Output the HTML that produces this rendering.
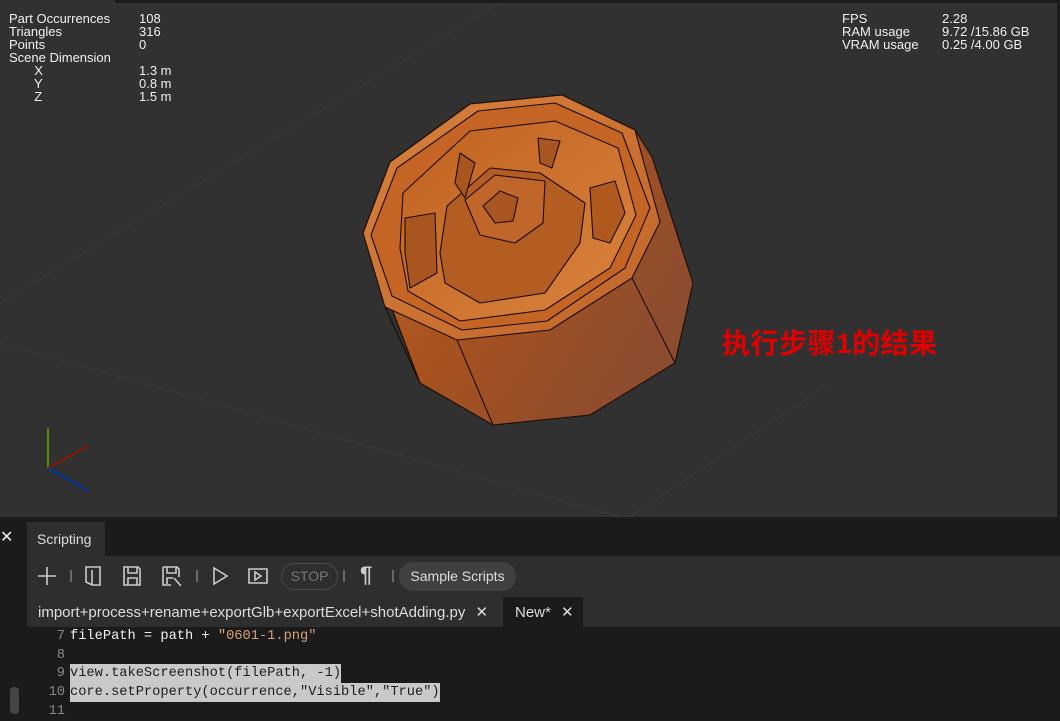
<!DOCTYPE html>
<html><head><meta charset="utf-8"><style>
*{margin:0;padding:0;box-sizing:border-box}
body{width:1060px;height:714px;background:#1b1b1b;overflow:hidden;position:relative;font-family:"Liberation Sans",sans-serif}
.vp{position:absolute;left:0;top:3px;width:1057px;height:514px;background:#313131}
.topbar{position:absolute;left:0;top:0;width:115px;height:3px;background:#313131}
.st{position:absolute;color:#f0f0f0;font-size:13px;line-height:13px}
.st div{white-space:pre;height:13px}
.red{position:absolute;left:722px;top:319px;color:#e00000;font-size:28px;font-weight:bold;font-family:"Liberation Sans","Noto Sans CJK SC",sans-serif;letter-spacing:0.5px}
.tab{position:absolute;left:27px;top:522px;width:78px;height:34px;background:#2e2e2e;color:#ddd;font-size:14px;padding:9px 0 0 10px}
.tb{position:absolute;left:27px;top:556px;width:1033px;height:41px;background:#2e2e2e}
.tabs{position:absolute;left:27px;top:597px;width:1033px;height:30px;background:#2e2e2e}
.t1{position:absolute;left:0;top:0;height:30px;padding:6px 0 0 11px;color:#ddd;font-size:15px;width:476px}
.t2{position:absolute;left:476px;top:0;width:80px;height:30px;background:#1b1b1b;color:#ddd;font-size:15px;padding:6px 0 0 12px}
.ed{position:absolute;left:27px;top:627px;width:1033px;height:87px;background:#1b1b1b;font-family:"Liberation Mono",monospace;font-size:13.7px;color:#f0f0f0}
.ln{position:absolute;height:19px;line-height:19px;white-space:pre}
.num{color:#888;position:absolute;width:38px;text-align:right}
.sel{background:#c9c9c9;color:#1e1e1e}
.icon{position:absolute;top:564px}
</style></head><body>
<div class="topbar"></div>
<div class="vp">
<svg width="1057" height="514" style="position:absolute;left:0;top:0">
<g stroke="#3a3a3a" stroke-width="1" fill="none">
<line x1="0" y1="300" x2="500" y2="0"/>
<line x1="0" y1="340" x2="620" y2="514"/>
<line x1="630" y1="514" x2="830" y2="380"/>
</g>
<defs>
<linearGradient id="g1" x1="0" y1="0" x2="1" y2="0.6"><stop offset="0" stop-color="#c46a30"/><stop offset="0.5" stop-color="#a8521e"/><stop offset="1" stop-color="#8c4c30"/></linearGradient>
<linearGradient id="g2" x1="0" y1="0" x2="1" y2="1"><stop offset="0" stop-color="#c0611f"/><stop offset="1" stop-color="#d9843f"/></linearGradient>
<linearGradient id="g3" x1="0" y1="0" x2="1" y2="1"><stop offset="0" stop-color="#d7803c"/><stop offset="1" stop-color="#c0652a"/></linearGradient>
</defs>
<g stroke="#1a0c04" stroke-width="1.1" stroke-linejoin="round">
<polygon fill="url(#g1)" points="470,101 562,92 635,127 652,154 693,280 675,360 590,412 493,422 420,380 400,327 363,230 390,159"/>
<polygon fill="url(#g3)" points="470,101 562,92 635,127 660,219 632,275 550,327 457,337 385,304 363,230 390,159"/>
<polygon fill="#c46526" points="478,108 555,100 622,130 650,205 625,265 547,318 462,327 392,293 371,232 397,165"/>
<polygon fill="url(#g2)" points="403,190 470,128 555,118 618,145 636,212 610,265 545,307 460,318 408,288 400,245"/>
<polygon fill="#b45d22" points="447,203 490,165 540,170 585,200 580,240 545,290 480,300 445,280 440,250"/>
<polygon fill="#c0662a" points="465,197 495,172 545,178 543,220 515,240 480,232"/>
<polygon fill="#a9551f" points="483,203 500,188 518,195 513,218 495,220"/>
<polygon fill="#a9551f" points="405,215 435,210 437,270 410,285 405,250"/>
<polygon fill="#b0591f" points="590,185 615,178 625,210 610,240 593,235"/>
<polygon fill="#a9551f" points="460,150 475,160 465,195 455,180"/>
<polygon fill="#a9551f" points="538,135 560,138 552,165 540,160"/>
<polyline fill="none" points="457,337 493,422"/>
<polyline fill="none" points="385,304 420,380"/>
<polyline fill="none" points="632,275 675,360"/>
</g>
</svg>
<div class="st" style="left:9px;top:9px">
<div>Part Occurrences</div><div>Triangles</div><div>Points</div><div>Scene Dimension</div><div>       X</div><div>       Y</div><div>       Z</div>
</div>
<div class="st" style="left:139px;top:9px">
<div>108</div><div>316</div><div>0</div><div> </div><div>1.3 m</div><div>0.8 m</div><div>1.5 m</div>
</div>
<div class="st" style="left:842px;top:9px"><div>FPS</div><div>RAM usage</div><div>VRAM usage</div></div>
<div class="st" style="left:942px;top:9px"><div>2.28</div><div>9.72 /15.86 GB</div><div>0.25 /4.00 GB</div></div>
<svg width="100" height="100" style="position:absolute;left:40px;top:415px">
<line x1="8" y1="10" x2="8" y2="50" stroke="#5a8a00" stroke-width="2"/>
<line x1="8" y1="50" x2="48" y2="28" stroke="#8a1a00" stroke-width="2"/>
<line x1="8" y1="50" x2="48" y2="73" stroke="#0038a0" stroke-width="2"/>
</svg>
<div class="red">执行步骤1的结果</div>
</div>
<div style="position:absolute;left:0;top:527px;color:#eee;font-size:16px">✕</div>
<div style="position:absolute;left:10px;top:687px;width:9px;height:27px;background:#444;border-radius:4px"></div>
<div class="tab">Scripting</div>
<div class="tb"></div>
<svg class="icon" width="500" height="26" style="left:30px" fill="none" stroke="#ccc" stroke-width="1.6">
<path d="M8 12h18M17 3v18"/>
<line x1="41" y1="6" x2="41" y2="18" stroke="#777"/>
<path d="M56 3h14v18h-8l-6-3zM62 6v15"/>
<path d="M94 3h14l2 2v16h-16zM98 3v6h9V3M98 21v-7h9v7"/>
<path d="M133 3h14l2 2v8M133 3v18h8M137 3v6h9V3M137 20v-6h6M144 14l7 8"/>
<line x1="167" y1="6" x2="167" y2="18" stroke="#777"/>
<path d="M184 4v16l13-8z"/>
<path d="M219 5h18v14h-18zM225 8v8l6-4z"/>
<line x1="314" y1="6" x2="314" y2="18" stroke="#777"/>
<line x1="363" y1="6" x2="363" y2="18" stroke="#777"/>
</svg>
<div style="position:absolute;left:281px;top:563px;width:57px;height:27px;border:1px solid #4a4a4a;border-radius:14px;color:#777;font-size:14px;text-align:center;line-height:25px">STOP</div>
<div style="position:absolute;left:360px;top:562px;color:#ccc;font-size:22px;font-weight:bold">¶</div>
<div style="position:absolute;left:399px;top:562px;width:117px;height:29px;background:#404040;border-radius:14px;color:#ddd;font-size:14px;text-align:center;line-height:29px">Sample Scripts</div>
<div class="tabs"><div class="t1">import+process+rename+exportGlb+exportExcel+shotAdding.py <span style="margin-left:6px">✕</span></div><div class="t2">New* <span style="margin-left:6px">✕</span></div></div>
<div class="ed">
<div class="ln" style="top:0"><span class="num" style="left:0">7</span><span style="position:absolute;left:43px">filePath = path + <span style="color:#d6a07a">"0601-1.png"</span></span></div>
<div class="ln" style="top:19px"><span class="num" style="left:0">8</span></div>
<div class="ln" style="top:37px"><span class="num" style="left:0">9</span><span class="sel" style="position:absolute;left:43px">view.takeScreenshot(filePath, -1)</span></div>
<div class="ln" style="top:56px"><span class="num" style="left:0">10</span><span class="sel" style="position:absolute;left:43px">core.setProperty(occurrence,"Visible","True")</span></div>
<div class="ln" style="top:75px"><span class="num" style="left:0">11</span></div>
</div>
</body></html>
